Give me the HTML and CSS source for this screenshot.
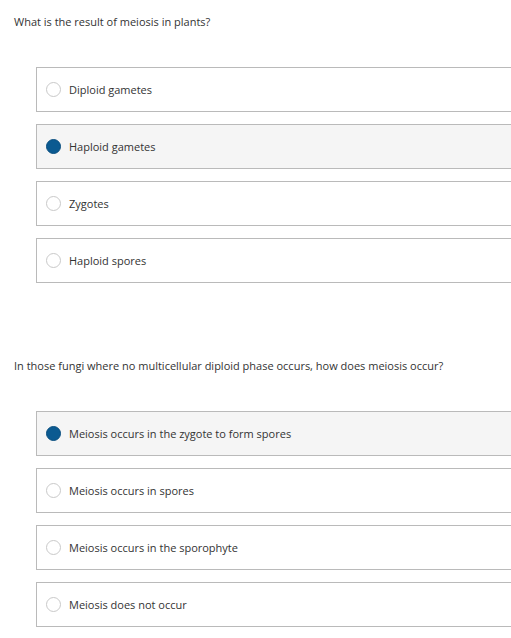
FILE: index.html
```html
<!DOCTYPE html>
<html>
<head>
<meta charset="utf-8">
<link rel="stylesheet" href="styles.css">
</head>
<body>
<div class="page">
  <section class="question">
    <p class="prompt">What is the result of meiosis in plants?</p>
    <div class="options">
      <label class="option"><span class="radio"></span><span class="label">Diploid gametes</span></label>
      <label class="option selected"><span class="radio"></span><span class="label">Haploid gametes</span></label>
      <label class="option"><span class="radio"></span><span class="label">Zygotes</span></label>
      <label class="option"><span class="radio"></span><span class="label">Haploid spores</span></label>
    </div>
  </section>
  <section class="question second">
    <p class="prompt">In those fungi where no multicellular diploid phase occurs, how does meiosis occur?</p>
    <div class="options">
      <label class="option selected"><span class="radio"></span><span class="label">Meiosis occurs in the zygote to form spores</span></label>
      <label class="option"><span class="radio"></span><span class="label">Meiosis occurs in spores</span></label>
      <label class="option"><span class="radio"></span><span class="label">Meiosis occurs in the sporophyte</span></label>
      <label class="option"><span class="radio"></span><span class="label">Meiosis does not occur</span></label>
    </div>
  </section>
</div>
</body>
</html>
```
FILE: styles.css
```css
html, body {
  margin: 0;
  padding: 0;
  background: #fff;
  overflow: hidden;
}
body {
  font-family: "Open Sans", "Liberation Sans", sans-serif;
  font-size: 11px;
  line-height: 16px;
  color: #333;
}
.page {
  padding-top: 14px;
}
.question.second {
  margin-top: 75px;
}
.prompt {
  margin: 0 0 0 14px;
}
.options {
  margin: 37px 0 0 36px;
  display: flex;
  flex-direction: column;
  gap: 12px;
  width: 500px;
}
.option {
  display: flex;
  align-items: center;
  height: 43px;
  border: 1px solid #bababa;
  background: #fff;
  padding-left: 9px;
}
.option.selected {
  background: #f5f5f5;
}
.radio {
  width: 13px;
  height: 13px;
  border-radius: 50%;
  border: 1px solid #c9c9c9;
  background: #fff;
  box-sizing: content-box;
  flex: none;
}
.option.selected .radio {
  background: #0b5a91;
  border-color: #0a4f80;
}
.label {
  margin-left: 8px;
}
```
